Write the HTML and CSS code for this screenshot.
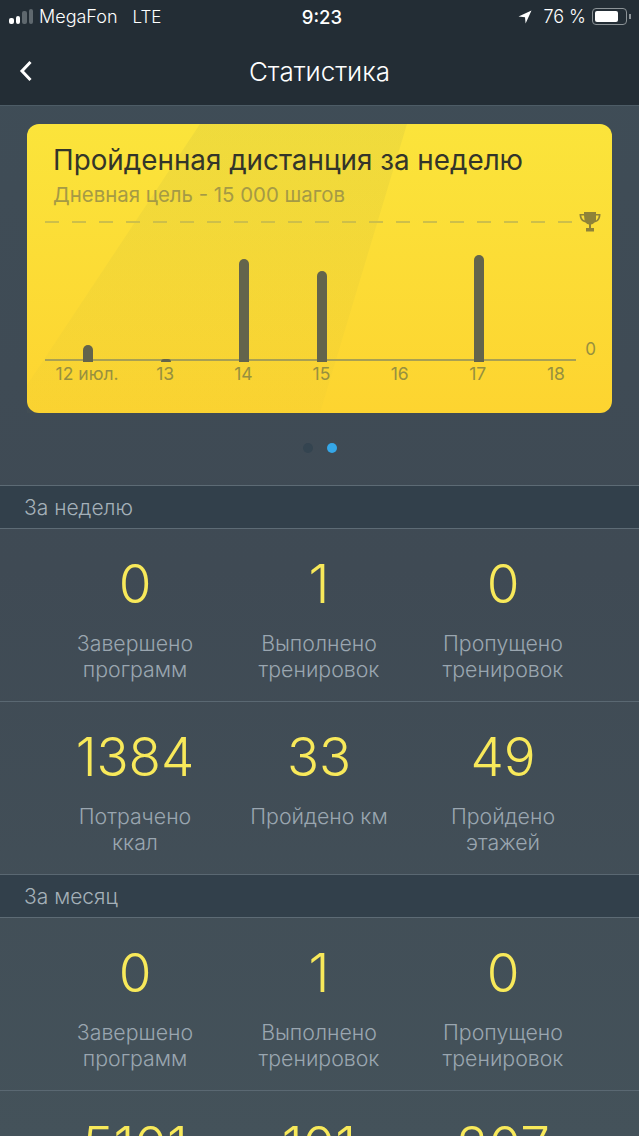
FILE: index.html
```html
<!DOCTYPE html>
<html>
<head>
	<meta charset="utf-8">
	<title>Статистика</title>
	<link rel="stylesheet" href="styles.css">
</head>
<body>
	<div class="screen">
		<div class="topbar">
			<div class="status">
				<div class="statusLeft">
					<span class="signal"><i></i><i></i><i class="off"></i><i class="off"></i></span>
					<span class="carrier">MegaFon</span>
					<span class="lte">LTE</span>
				</div>
				<div class="time">9:23</div>
				<div class="statusRight">
					<svg class="arrow" width="14" height="14" viewBox="0 0 14 14"><path d="M13.5 .5 L.5 6.6 L7 7.2 L7.6 13.6 Z" fill="#fff"/></svg>
					<span class="percent">76 %</span>
					<span class="battery"><i></i></span>
					<span class="batteryTip"></span>
				</div>
			</div>
			<div class="nav">
				<svg class="back" width="14" height="22" viewBox="0 0 14 22"><path d="M11.5 2 L3 11 L11.5 20" fill="none" stroke="#fff" stroke-width="3"/></svg>
				<div class="navTitle">Статистика</div>
			</div>
		</div>

		<div class="hero">
			<div class="card">
				<div class="cardTitle">Пройденная дистанция за неделю</div>
				<div class="cardSub">Дневная цель - 15 000 шагов</div>
				<div class="goal">
					<div class="dash"></div>
					<svg class="cup" width="22" height="22" viewBox="0 0 22 22"><path d="M5 1 H17 V3 H21.5 C21.5 8 19.5 10.5 15.5 11.5 C14.5 12.6 13 13.4 12 13.6 V17 H15 V20.5 H7 V17 H10 V13.6 C9 13.4 7.5 12.6 6.5 11.5 C2.5 10.5 .5 8 .5 3 H5 Z M5 4.5 H2.3 C2.6 7 3.6 8.6 5.6 9.5 Z M17 4.5 V9.5 C18.4 8.6 19.4 7 19.7 4.5 Z" fill="#8f8338" fill-rule="evenodd"/></svg>
				</div>
				<div class="bars">
					<div class="col"><div class="bar" style="height:17px"></div></div>
					<div class="col"><div class="bar" style="height:3px"></div></div>
					<div class="col"><div class="bar" style="height:103px"></div></div>
					<div class="col"><div class="bar" style="height:91px"></div></div>
					<div class="col"></div>
					<div class="col"><div class="bar" style="height:107px"></div></div>
					<div class="col"></div>
					<span class="zero">0</span>
				</div>
				<div class="labels">
					<span>12 июл.</span><span>13</span><span>14</span><span>15</span><span>16</span><span>17</span><span>18</span>
				</div>
			</div>
			<div class="dots"><span></span><span class="on"></span></div>
		</div>

		<div class="sectionHead">За неделю</div>
		<div class="statRow">
			<div class="stat"><div class="num">0</div><div class="cap">Завершено<br>программ</div></div>
			<div class="stat"><div class="num">1</div><div class="cap">Выполнено<br>тренировок</div></div>
			<div class="stat"><div class="num">0</div><div class="cap">Пропущено<br>тренировок</div></div>
		</div>
		<div class="statRow">
			<div class="stat"><div class="num">1384</div><div class="cap">Потрачено<br>ккал</div></div>
			<div class="stat"><div class="num">33</div><div class="cap">Пройдено км</div></div>
			<div class="stat"><div class="num">49</div><div class="cap">Пройдено<br>этажей</div></div>
		</div>

		<div class="sectionHead">За месяц</div>
		<div class="statRow">
			<div class="stat"><div class="num">0</div><div class="cap">Завершено<br>программ</div></div>
			<div class="stat"><div class="num">1</div><div class="cap">Выполнено<br>тренировок</div></div>
			<div class="stat"><div class="num">0</div><div class="cap">Пропущено<br>тренировок</div></div>
		</div>
		<div class="statRow">
			<div class="stat"><div class="num">5101</div><div class="cap">Потрачено<br>ккал</div></div>
			<div class="stat"><div class="num">101</div><div class="cap">Пройдено км</div></div>
			<div class="stat"><div class="num">207</div><div class="cap">Пройдено<br>этажей</div></div>
		</div>
	</div>
</body>
</html>
```

FILE: styles.css
```css
html, body {
	margin: 0;
	padding: 0;
}
body {
	background: #3f4c56;
	font-family: Inter, Roboto, sans-serif;
	font-weight: 300;
}
.screen {
	width: 639px;
	height: 1136px;
	overflow: hidden;
	background: linear-gradient(180deg, #3f4d57 0%, #3f4a54 50%, #44525a 100%);
}
.topbar {
	height: 105px;
	background: #232d35;
	color: #fff;
	border-bottom: 1px solid #4d5c66;
}
.status {
	display: flex;
	justify-content: space-between;
	align-items: center;
	height: 33px;
	padding: 0 8px 0 9px;
	font-size: 18px;
}
.statusLeft, .statusRight {
	display: flex;
	align-items: center;
	width: 200px;
}
.statusLeft {
	width: 204px;
}
.statusRight {
	justify-content: flex-end;
}
.signal {
	display: flex;
	align-items: flex-end;
	gap: 2px;
	margin-right: 6px;
}
.signal i {
	display: block;
	width: 4.5px;
	border-radius: 2px;
	background: #fff;
}
.signal i:nth-child(1) { height: 6px; }
.signal i:nth-child(2) { height: 8px; }
.signal i:nth-child(3) { height: 13px; }
.signal i:nth-child(4) { height: 15px; }
.signal i.off {
	background: #5f686e;
}
.lte {
	margin-left: 15px;
	font-size: 17px;
}
.time {
	font-size: 18.5px;
	font-weight: 500;
}
.arrow {
	margin-right: 11px;
}
.percent {
	margin-right: 6px;
}
.battery {
	display: block;
	box-sizing: border-box;
	width: 35px;
	height: 17px;
	padding: 2px;
	border: 1px solid #8c9397;
	border-radius: 4px;
}
.battery i {
	display: block;
	width: 80%;
	height: 100%;
	background: #fff;
	border-radius: 2px;
}
.batteryTip {
	display: block;
	width: 2px;
	height: 5px;
	margin-left: 2px;
	background: #8c9397;
}
.nav {
	position: relative;
	box-sizing: border-box;
	height: 72px;
	padding-top: 5px;
	display: flex;
	align-items: center;
	justify-content: center;
}
.navTitle {
	font-size: 26px;
}
.back {
	position: absolute;
	left: 19px;
	top: 27px;
}
.hero {
	box-sizing: border-box;
	height: 380px;
	padding: 18px 27px 0 27px;
	border-bottom: 1px solid #5d6b75;
}
.card {
	position: relative;
	isolation: isolate;
	box-sizing: border-box;
	height: 289px;
	padding-top: 20px;
	border-radius: 12px;
	background: linear-gradient(180deg, #fbe43b 0%, #fdd430 100%);
	color: #33352a;
}
/* diagonal sheen behind the chart */
.card::before {
	content: "";
	position: absolute;
	inset: 0;
	z-index: -1;
	background: linear-gradient(180deg, rgba(160,160,70,.13), rgba(160,160,70,.03));
	clip-path: polygon(173px 0, 380px 0, 293px 100%, 0 100%, 0 261px);
}
.cardTitle {
	margin-left: 26px;
	font-size: 27.8px;
	font-weight: 400;
	line-height: 32px;
	white-space: nowrap;
}
.cardSub {
	margin: 7px 0 0 26px;
	font-size: 20.4px;
	font-weight: 400;
	line-height: 24px;
	color: #a59a45;
}
.goal {
	display: flex;
	align-items: center;
	height: 22px;
	margin: 4px 0 0 18px;
	padding-right: 11px;
}
.dash {
	flex: 1;
	height: 2px;
	margin-top: -1px;
	background: repeating-linear-gradient(90deg, #cdbf4a 0 14px, transparent 14px 27px);
}
.cup {
	margin-left: 2px;
}
.bars {
	position: relative;
	display: flex;
	align-items: flex-end;
	width: 547px;
	height: 109px;
	margin: 20px 0 0 22px;
}
.bars::before {
	content: "";
	position: absolute;
	left: -4px;
	right: 20px;
	bottom: 1px;
	height: 2px;
	background: #a9a052;
}
.col {
	flex: 1;
	display: flex;
	justify-content: center;
}
.bar {
	position: relative;
	width: 10px;
	border-radius: 5px 5px 0 0;
	background: #63644c;
}
.zero {
	position: absolute;
	right: 0;
	bottom: 3px;
	font-size: 17px;
	font-weight: 400;
	line-height: 20px;
	color: #97903f;
}
.labels {
	display: flex;
	width: 547px;
	margin: 2px 0 0 21px;
}
.labels span {
	flex: 1;
	text-align: center;
	font-size: 17.5px;
	font-weight: 400;
	line-height: 20px;
	color: #97903f;
}
.dots {
	display: flex;
	justify-content: center;
	gap: 14px;
	margin-top: 30px;
}
.dots span {
	width: 10px;
	height: 10px;
	border-radius: 50%;
	background: #344450;
}
.dots span.on {
	background: #35a7e8;
}
.sectionHead {
	box-sizing: border-box;
	height: 43px;
	padding: 1px 0 0 24px;
	line-height: 42px;
	font-size: 21px;
	color: #a5b1b9;
	background: #32404b;
	border-bottom: 1px solid #5d6b75;
}
.statRow {
	box-sizing: border-box;
	display: flex;
	height: 173px;
	padding: 0 44px 0 43px;
	border-bottom: 1px solid #5a6872;
}
.stat {
	flex: 1;
	text-align: center;
}
.num {
	margin-top: 25px;
	font-size: 53px;
	line-height: 60px;
	color: #f8e95a;
}
.cap {
	margin-top: 16px;
	font-size: 21.3px;
	line-height: 26px;
	color: #9aa6b0;
}
```
